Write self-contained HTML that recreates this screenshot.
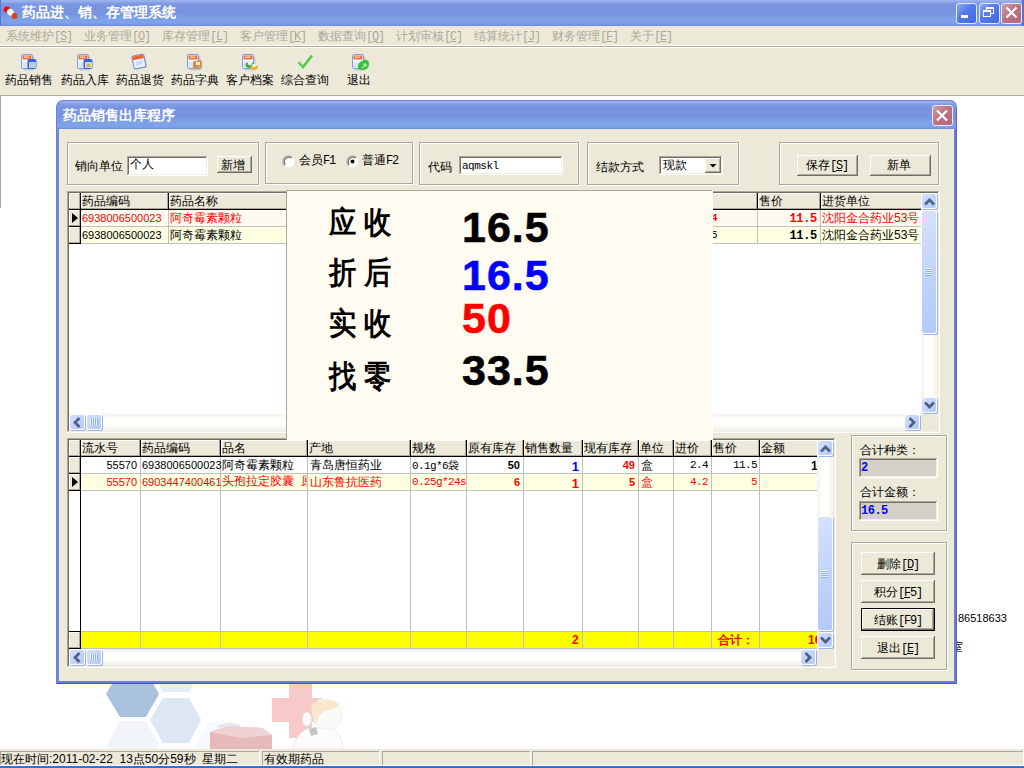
<!DOCTYPE html>
<html><head><meta charset="utf-8">
<style>
html,body{margin:0;padding:0}
body{width:1024px;height:768px;overflow:hidden;position:relative;background:#fff;font-family:"Liberation Sans",sans-serif;font-size:12px;color:#000}
.a{position:absolute}
.t{position:absolute;white-space:nowrap}
u{text-decoration:underline;text-underline-offset:1px;text-decoration-thickness:1px}
.m{font-family:"Liberation Mono",monospace;font-size:12px;letter-spacing:-1.2px}
</style></head><body>
<div class="a" style="left:0px;top:0px;width:1024px;height:26px;background:linear-gradient(#9EB3EC 0px,#9AB0EB 1px,#82A0E6 3px,#7995E0 5px,#7894E0 14px,#7CA0E6 18px,#7FA3E8 22px,#7A9AE6 24px,#6C88DF 26px);"></div>
<div class="a" style="left:0px;top:0px;width:1px;height:26px;background:#5A70CE;"></div>
<div class="a" style="left:1022px;top:0px;width:2px;height:26px;background:#5A70CE;"></div>
<svg class="a" style="left:2px;top:5px" width="16" height="14" viewBox="0 0 16 14">
<ellipse cx="5" cy="4.5" rx="3.5" ry="3" fill="#E81010"/>
<ellipse cx="8.5" cy="7.2" rx="3.2" ry="3.6" fill="#F8F8F0" transform="rotate(-40 8.5 7.2)"/>
<ellipse cx="12.5" cy="11" rx="2.8" ry="3" fill="#E04010"/>
</svg>
<div class="t" style="left:22px;top:5px;font-size:14px;line-height:14px;color:#fff;font-weight:bold;letter-spacing:0px">药品进、销、存管理系统</div>
<div class="a" style="left:956px;top:3px;width:21px;height:21px;box-sizing:border-box;border:1px solid #E4ECFA;border-radius:3px;background:linear-gradient(135deg,#8FA9F2 0%,#5478E6 45%,#3E68E2 100%)"></div>
<div class="a" style="left:961px;top:15px;width:7px;height:3px;background:#fff;"></div>
<div class="a" style="left:979px;top:3px;width:21px;height:21px;box-sizing:border-box;border:1px solid #E4ECFA;border-radius:3px;background:linear-gradient(135deg,#8FA9F2 0%,#5478E6 45%,#3E68E2 100%)"></div>
<div class="a" style="left:986px;top:7px;width:8px;height:7px;box-sizing:border-box;border:1px solid #fff;border-top-width:2px"></div>
<div class="a" style="left:983px;top:10px;width:8px;height:7px;box-sizing:border-box;border:1px solid #fff;border-top-width:2px;background:#5C7EE6"></div>
<div class="a" style="left:1001px;top:3px;width:21px;height:21px;box-sizing:border-box;border:1px solid #E4ECFA;border-radius:3px;background:linear-gradient(135deg,#D09CAC 0%,#BC7080 50%,#B46878 100%)"></div>
<svg class="a" style="left:1001px;top:3px" width="21" height="21"><path d="M5.5 4.5 L15.5 14.5 M15.5 4.5 L5.5 14.5" stroke="#fff" stroke-width="2.2"/></svg>
<div class="a" style="left:0px;top:26px;width:1024px;height:22px;background:#ECE9D8;"></div>
<div class="a" style="left:0px;top:45px;width:1024px;height:1px;background:#fff;"></div>
<div class="a" style="left:0px;top:46px;width:1024px;height:1px;background:#ACA899;"></div>
<div class="a" style="left:0px;top:47px;width:1024px;height:1px;background:#fff;"></div>
<div class="t" style="left:6px;top:30px;font-size:12px;line-height:12px;color:#ACA899;">系统维护<span class="m">[<u>S</u>]</span></div>
<div class="t" style="left:84px;top:30px;font-size:12px;line-height:12px;color:#ACA899;">业务管理<span class="m">[<u>O</u>]</span></div>
<div class="t" style="left:162px;top:30px;font-size:12px;line-height:12px;color:#ACA899;">库存管理<span class="m">[<u>L</u>]</span></div>
<div class="t" style="left:240px;top:30px;font-size:12px;line-height:12px;color:#ACA899;">客户管理<span class="m">[<u>K</u>]</span></div>
<div class="t" style="left:318px;top:30px;font-size:12px;line-height:12px;color:#ACA899;">数据查询<span class="m">[<u>Q</u>]</span></div>
<div class="t" style="left:396px;top:30px;font-size:12px;line-height:12px;color:#ACA899;">计划审核<span class="m">[<u>C</u>]</span></div>
<div class="t" style="left:474px;top:30px;font-size:12px;line-height:12px;color:#ACA899;">结算统计<span class="m">[<u>J</u>]</span></div>
<div class="t" style="left:552px;top:30px;font-size:12px;line-height:12px;color:#ACA899;">财务管理<span class="m">[<u>F</u>]</span></div>
<div class="t" style="left:630px;top:30px;font-size:12px;line-height:12px;color:#ACA899;">关于<span class="m">[<u>E</u>]</span></div>
<div class="a" style="left:0px;top:48px;width:1024px;height:47px;background:#ECE9D8;"></div>
<div class="a" style="left:0px;top:95px;width:1024px;height:1px;background:#ACA899;"></div>
<div class="t" style="left:5px;top:74px;font-size:12px;line-height:12px;">药品销售</div>
<div class="t" style="left:61px;top:74px;font-size:12px;line-height:12px;">药品入库</div>
<div class="t" style="left:116px;top:74px;font-size:12px;line-height:12px;">药品退货</div>
<div class="t" style="left:171px;top:74px;font-size:12px;line-height:12px;">药品字典</div>
<div class="t" style="left:226px;top:74px;font-size:12px;line-height:12px;">客户档案</div>
<div class="t" style="left:281px;top:74px;font-size:12px;line-height:12px;">综合查询</div>
<div class="t" style="left:347px;top:74px;font-size:12px;line-height:12px;">退出</div>
<svg class="a" style="left:21px;top:54px" width="18" height="18" viewBox="0 0 18 18">
<g transform="rotate(0 7 8)">
<rect x="1.5" y="1.5" width="11" height="14" rx="1.5" fill="#A0A8C0" opacity=".5" transform="translate(1 1)"/>
<rect x="0.5" y="0.5" width="11" height="14" rx="1.5" fill="#F8FAFF" stroke="#7F9FDF"/><rect x="1" y="8" width="10" height="6" fill="#DCE6FA"/>
<rect x="1.5" y="1.5" width="9" height="4" fill="#F07038"/>
<rect x="3" y="2.5" width="5" height="1.5" fill="#FFD0B0"/>
</g></svg>
<svg class="a" style="left:27px;top:58px" width="11" height="12" viewBox="0 0 11 12">
<rect x="0.5" y="1" width="9" height="10" rx="2" fill="#3C62D8"/><rect x="2" y="4" width="7" height="6" fill="#B8CCF4"/><path d="M3 7 L8 5" stroke="#F0C060"/></svg>
<svg class="a" style="left:77px;top:54px" width="18" height="18" viewBox="0 0 18 18">
<g transform="rotate(0 7 8)">
<rect x="1.5" y="1.5" width="11" height="14" rx="1.5" fill="#A0A8C0" opacity=".5" transform="translate(1 1)"/>
<rect x="0.5" y="0.5" width="11" height="14" rx="1.5" fill="#F8FAFF" stroke="#7F9FDF"/><rect x="1" y="8" width="10" height="6" fill="#DCE6FA"/>
<rect x="1.5" y="1.5" width="9" height="4" fill="#F07038"/>
<rect x="3" y="2.5" width="5" height="1.5" fill="#FFD0B0"/>
</g></svg>
<svg class="a" style="left:83px;top:58px" width="11" height="12" viewBox="0 0 11 12">
<rect x="0.5" y="1" width="9" height="10" rx="2" fill="#3C62D8"/><rect x="2" y="4" width="7" height="6" fill="#C8D8F8"/><circle cx="5.5" cy="7.5" r="2" fill="#E8B020"/></svg>
<svg class="a" style="left:131px;top:53px" width="18" height="18" viewBox="0 0 18 18">
<g transform="rotate(-12 8 9)">
<rect x="3" y="3" width="12" height="13" rx="1.5" fill="#8890A8" opacity=".5"/>
<rect x="2" y="2" width="12" height="13" rx="1.5" fill="#E8F0FF" stroke="#7090D8"/>
<rect x="2.5" y="2.5" width="11" height="3.5" fill="#F06030"/>
<path d="M5 9 L11 9 M5 11 L10 11" stroke="#A8C0F0"/>
</g></svg>
<svg class="a" style="left:187px;top:54px" width="18" height="18" viewBox="0 0 18 18">
<g transform="rotate(0 7 8)">
<rect x="1.5" y="1.5" width="11" height="14" rx="1.5" fill="#A0A8C0" opacity=".5" transform="translate(1 1)"/>
<rect x="0.5" y="0.5" width="11" height="14" rx="1.5" fill="#F8FAFF" stroke="#7F9FDF"/><rect x="1" y="8" width="10" height="6" fill="#DCE6FA"/>
<rect x="1.5" y="1.5" width="9" height="4" fill="#F07038"/>
<rect x="3" y="2.5" width="5" height="1.5" fill="#FFD0B0"/>
</g></svg>
<svg class="a" style="left:192px;top:59px" width="11" height="11" viewBox="0 0 11 11">
<path d="M1 4 Q1 1 4 2 L8 1 Q10 1 10 4 L10 8 Q10 10 7 10 L3 10 Q1 10 1 8 Z" fill="#D89040"/><rect x="4" y="3" width="4" height="3" fill="#F8E8D0"/><rect x="6" y="7" width="3" height="2" fill="#90B0F0"/></svg>
<svg class="a" style="left:242px;top:54px" width="18" height="18" viewBox="0 0 18 18">
<g transform="rotate(0 7 8)">
<rect x="1.5" y="1.5" width="11" height="14" rx="1.5" fill="#A0A8C0" opacity=".5" transform="translate(1 1)"/>
<rect x="0.5" y="0.5" width="11" height="14" rx="1.5" fill="#F8FAFF" stroke="#7F9FDF"/><rect x="1" y="8" width="10" height="6" fill="#DCE6FA"/>
<rect x="1.5" y="1.5" width="9" height="4" fill="#F07038"/>
<rect x="3" y="2.5" width="5" height="1.5" fill="#FFD0B0"/>
</g></svg>
<svg class="a" style="left:244px;top:59px" width="14" height="11" viewBox="0 0 14 11">
<ellipse cx="6" cy="6" rx="4.5" ry="3" fill="#40B040"/><circle cx="6" cy="4" r="2.2" fill="#F0F0F0"/>
<ellipse cx="10" cy="8.5" rx="3.8" ry="2.2" fill="#F0B020"/><circle cx="10" cy="6.5" r="1.8" fill="#F4F4F4"/></svg>
<svg class="a" style="left:297px;top:54px" width="17" height="15" viewBox="0 0 17 15">
<path d="M1.5 8 L6 13 L15 1.5" stroke="#4CCB4C" stroke-width="2.6" fill="none"/><path d="M2 8 L6 12" stroke="#80E880" stroke-width="0.8"/></svg>
<svg class="a" style="left:352px;top:54px" width="18" height="18" viewBox="0 0 18 18">
<g transform="rotate(0 7 8)">
<rect x="1.5" y="1.5" width="11" height="14" rx="1.5" fill="#A0A8C0" opacity=".5" transform="translate(1 1)"/>
<rect x="0.5" y="0.5" width="11" height="14" rx="1.5" fill="#F8FAFF" stroke="#7F9FDF"/><rect x="1" y="8" width="10" height="6" fill="#DCE6FA"/>
<rect x="1.5" y="1.5" width="9" height="4" fill="#F07038"/>
<rect x="3" y="2.5" width="5" height="1.5" fill="#FFD0B0"/>
</g></svg>
<svg class="a" style="left:357px;top:58px" width="12" height="12" viewBox="0 0 12 12">
<path d="M1 11 Q0 4 7 2 Q12 1 12 6 Q12 12 5 12 Z" fill="#3CC03C"/><path d="M5 10 L9 6 M9 6 L9 9 M9 6 L6 6" stroke="#A8F0A8" stroke-width="1.2"/></svg>
<div class="a" style="left:0px;top:96px;width:1px;height:112px;background:#ACA899;"></div>
<svg class="a" style="left:60px;top:684px" width="320" height="65" viewBox="60 684 320 65">
<polygon points="150,669 163,647 189,647 201,669 189,692 163,692" fill="#E6EEF7"/>
<polygon points="106,694 120,671 146,671 159,694 146,717 120,717" fill="#AAC1DD"/>
<polygon points="150,720 163,698 189,698 201,720 189,743 163,743" fill="#DDE7F3"/>
<polygon points="107,744 120,721 146,721 159,744 146,767 120,767" fill="#F1F5FA"/>
<polygon points="196,744 209,722 235,722 248,744 235,767 209,767" fill="#F6F8FB"/>
<rect x="289" y="684" width="23" height="54" fill="#F8C9C9"/>
<rect x="272" y="698" width="50" height="24" fill="#F8C9C9"/>
<path d="M210 749 L210 732 L228 726 L262 728 L272 735 L272 749 Z" fill="#E6BABA"/>
<path d="M210 732 L228 726 L262 728 L272 735 L240 738 Z" fill="#EFD2D2"/>
<path d="M218 727 Q228 722 240 726" stroke="#DCE6F0" stroke-width="2" fill="none"/>
<path d="M293 749 Q296 735 306 729 L330 727 Q342 732 343 749 Z" fill="#FCFCFC" stroke="#E4E4E4" stroke-width="0.8"/>
<path d="M318 700 Q332 696 340 706 Q346 720 336 728 Q322 732 314 722 Z" fill="#FAFAF8" stroke="#ECECEC" stroke-width="0.8"/>
<path d="M312 704 Q324 697 340 703 Q338 710 326 710 Q318 714 316 724 Q310 716 312 704 Z" fill="#F9E6CC"/>
<ellipse cx="307" cy="719" rx="4.5" ry="7" fill="#FBFBFB" stroke="#E6E6E6" stroke-width="0.8"/>
<path d="M309 729 L316 727 L318 734 L311 736 Z" fill="#C4C4C4"/>
</svg>
<div class="t" style="left:958px;top:613px;font-size:11px;line-height:11px;font-family:&quot;Liberation Sans&quot;,sans-serif;">86518633</div>
<div class="a" style="left:957px;top:641px;width:6px;height:12px;overflow:hidden"><div class="t" style="left:-6px;top:0;font-size:12px;line-height:12px">室</div></div>
<div class="a" style="left:0px;top:749px;width:1024px;height:17px;background:#ECE9D8;"></div>
<div class="a" style="left:0px;top:751px;width:259px;height:1px;background:#ACA899;"></div>
<div class="a" style="left:0px;top:751px;width:1px;height:14px;background:#ACA899;"></div>
<div class="a" style="left:259px;top:751px;width:1px;height:15px;background:#fff;"></div>
<div class="a" style="left:0px;top:765px;width:260px;height:1px;background:#fff;"></div>
<div class="a" style="left:262px;top:751px;width:117px;height:1px;background:#ACA899;"></div>
<div class="a" style="left:262px;top:751px;width:1px;height:14px;background:#ACA899;"></div>
<div class="a" style="left:379px;top:751px;width:1px;height:15px;background:#fff;"></div>
<div class="a" style="left:262px;top:765px;width:118px;height:1px;background:#fff;"></div>
<div class="a" style="left:382px;top:751px;width:148px;height:1px;background:#ACA899;"></div>
<div class="a" style="left:382px;top:751px;width:1px;height:14px;background:#ACA899;"></div>
<div class="a" style="left:530px;top:751px;width:1px;height:15px;background:#fff;"></div>
<div class="a" style="left:382px;top:765px;width:149px;height:1px;background:#fff;"></div>
<div class="a" style="left:532px;top:751px;width:491px;height:1px;background:#ACA899;"></div>
<div class="a" style="left:532px;top:751px;width:1px;height:14px;background:#ACA899;"></div>
<div class="a" style="left:1023px;top:751px;width:1px;height:15px;background:#fff;"></div>
<div class="a" style="left:532px;top:765px;width:492px;height:1px;background:#fff;"></div>
<div class="t" style="left:1px;top:753px;font-size:12px;line-height:12px;">现在时间:2011-02-22&nbsp; 13点50分59秒&nbsp; 星期二</div>
<div class="t" style="left:264px;top:753px;font-size:12px;line-height:12px;">有效期药品</div>
<div class="a" style="left:0px;top:766px;width:1024px;height:2px;background:linear-gradient(#3C78E0,#2F66D8);"></div>
<div class="a" style="left:56px;top:100px;width:901px;height:584px;background:#6C7FD8;border-radius:7px 7px 0 0"></div>
<div class="a" style="left:57px;top:101px;width:899px;height:28px;background:linear-gradient(#9EB3EC 0px,#9AB0EB 1px,#82A0E6 3px,#7995E0 6px,#7894E0 16px,#7CA0E6 20px,#7FA3E8 25px,#7A9AE6 27px,#6C88DF 28px);border-radius:6px 6px 0 0"></div>
<div class="a" style="left:57px;top:129px;width:2px;height:554px;background:#7088DC;"></div>
<div class="a" style="left:954px;top:129px;width:2px;height:554px;background:#6A80D8;"></div>
<div class="a" style="left:57px;top:683px;width:900px;height:1px;background:#4C50C0;"></div>
<div class="a" style="left:956px;top:108px;width:1px;height:576px;background:#5A60C8;"></div>
<div class="a" style="left:59px;top:129px;width:895px;height:552px;background:#ECE9D8;"></div>
<div class="t" style="left:63px;top:108px;font-size:14px;line-height:14px;color:#fff;font-weight:bold;">药品销售出库程序</div>
<div class="a" style="left:932px;top:105px;width:21px;height:21px;box-sizing:border-box;border:1px solid #E4ECFA;border-radius:3px;background:linear-gradient(135deg,#D09CAC 0%,#BC7080 50%,#B46878 100%)"></div>
<svg class="a" style="left:932px;top:105px" width="21" height="21"><path d="M5 5.5 L15 15.5 M15 5.5 L5 15.5" stroke="#fff" stroke-width="2.2"/></svg>
<div class="a" style="left:67px;top:142px;width:192px;height:1px;background:#ACA899;"></div>
<div class="a" style="left:67px;top:142px;width:1px;height:43px;background:#ACA899;"></div>
<div class="a" style="left:67px;top:184px;width:192px;height:1px;background:#ACA899;"></div>
<div class="a" style="left:258px;top:142px;width:1px;height:43px;background:#ACA899;"></div>
<div class="a" style="left:68px;top:143px;width:190px;height:1px;background:#fff;"></div>
<div class="a" style="left:68px;top:143px;width:1px;height:41px;background:#fff;"></div>
<div class="a" style="left:67px;top:185px;width:193px;height:1px;background:#fff;"></div>
<div class="a" style="left:259px;top:142px;width:1px;height:44px;background:#fff;"></div>
<div class="a" style="left:265px;top:142px;width:148px;height:1px;background:#ACA899;"></div>
<div class="a" style="left:265px;top:142px;width:1px;height:42px;background:#ACA899;"></div>
<div class="a" style="left:265px;top:183px;width:148px;height:1px;background:#ACA899;"></div>
<div class="a" style="left:412px;top:142px;width:1px;height:42px;background:#ACA899;"></div>
<div class="a" style="left:266px;top:143px;width:146px;height:1px;background:#fff;"></div>
<div class="a" style="left:266px;top:143px;width:1px;height:40px;background:#fff;"></div>
<div class="a" style="left:265px;top:184px;width:149px;height:1px;background:#fff;"></div>
<div class="a" style="left:413px;top:142px;width:1px;height:43px;background:#fff;"></div>
<div class="a" style="left:419px;top:142px;width:160px;height:1px;background:#ACA899;"></div>
<div class="a" style="left:419px;top:142px;width:1px;height:43px;background:#ACA899;"></div>
<div class="a" style="left:419px;top:184px;width:160px;height:1px;background:#ACA899;"></div>
<div class="a" style="left:578px;top:142px;width:1px;height:43px;background:#ACA899;"></div>
<div class="a" style="left:420px;top:143px;width:158px;height:1px;background:#fff;"></div>
<div class="a" style="left:420px;top:143px;width:1px;height:41px;background:#fff;"></div>
<div class="a" style="left:419px;top:185px;width:161px;height:1px;background:#fff;"></div>
<div class="a" style="left:579px;top:142px;width:1px;height:44px;background:#fff;"></div>
<div class="a" style="left:587px;top:142px;width:152px;height:1px;background:#ACA899;"></div>
<div class="a" style="left:587px;top:142px;width:1px;height:43px;background:#ACA899;"></div>
<div class="a" style="left:587px;top:184px;width:152px;height:1px;background:#ACA899;"></div>
<div class="a" style="left:738px;top:142px;width:1px;height:43px;background:#ACA899;"></div>
<div class="a" style="left:588px;top:143px;width:150px;height:1px;background:#fff;"></div>
<div class="a" style="left:588px;top:143px;width:1px;height:41px;background:#fff;"></div>
<div class="a" style="left:587px;top:185px;width:153px;height:1px;background:#fff;"></div>
<div class="a" style="left:739px;top:142px;width:1px;height:44px;background:#fff;"></div>
<div class="a" style="left:779px;top:142px;width:160px;height:1px;background:#ACA899;"></div>
<div class="a" style="left:779px;top:142px;width:1px;height:43px;background:#ACA899;"></div>
<div class="a" style="left:779px;top:184px;width:160px;height:1px;background:#ACA899;"></div>
<div class="a" style="left:938px;top:142px;width:1px;height:43px;background:#ACA899;"></div>
<div class="a" style="left:780px;top:143px;width:158px;height:1px;background:#fff;"></div>
<div class="a" style="left:780px;top:143px;width:1px;height:41px;background:#fff;"></div>
<div class="a" style="left:779px;top:185px;width:161px;height:1px;background:#fff;"></div>
<div class="a" style="left:939px;top:142px;width:1px;height:44px;background:#fff;"></div>
<div class="a" style="left:851px;top:435px;width:96px;height:1px;background:#ACA899;"></div>
<div class="a" style="left:851px;top:435px;width:1px;height:96px;background:#ACA899;"></div>
<div class="a" style="left:851px;top:530px;width:96px;height:1px;background:#ACA899;"></div>
<div class="a" style="left:946px;top:435px;width:1px;height:96px;background:#ACA899;"></div>
<div class="a" style="left:852px;top:436px;width:94px;height:1px;background:#fff;"></div>
<div class="a" style="left:852px;top:436px;width:1px;height:94px;background:#fff;"></div>
<div class="a" style="left:851px;top:531px;width:97px;height:1px;background:#fff;"></div>
<div class="a" style="left:947px;top:435px;width:1px;height:97px;background:#fff;"></div>
<div class="a" style="left:851px;top:542px;width:96px;height:1px;background:#ACA899;"></div>
<div class="a" style="left:851px;top:542px;width:1px;height:128px;background:#ACA899;"></div>
<div class="a" style="left:851px;top:669px;width:96px;height:1px;background:#ACA899;"></div>
<div class="a" style="left:946px;top:542px;width:1px;height:128px;background:#ACA899;"></div>
<div class="a" style="left:852px;top:543px;width:94px;height:1px;background:#fff;"></div>
<div class="a" style="left:852px;top:543px;width:1px;height:126px;background:#fff;"></div>
<div class="a" style="left:851px;top:670px;width:97px;height:1px;background:#fff;"></div>
<div class="a" style="left:947px;top:542px;width:1px;height:129px;background:#fff;"></div>
<div class="t" style="left:75px;top:160px;font-size:12px;line-height:12px;">销向单位</div>
<div class="a" style="left:127px;top:156px;width:81px;height:20px;background:#fff;"></div>
<div class="a" style="left:127px;top:156px;width:80px;height:1px;background:#ACA899;"></div>
<div class="a" style="left:127px;top:156px;width:1px;height:19px;background:#ACA899;"></div>
<div class="a" style="left:128px;top:157px;width:78px;height:1px;background:#716F64;"></div>
<div class="a" style="left:128px;top:157px;width:1px;height:17px;background:#716F64;"></div>
<div class="a" style="left:128px;top:174px;width:79px;height:1px;background:#F1EFE2;"></div>
<div class="a" style="left:206px;top:157px;width:1px;height:18px;background:#F1EFE2;"></div>
<div class="a" style="left:127px;top:175px;width:81px;height:1px;background:#fff;"></div>
<div class="a" style="left:207px;top:156px;width:1px;height:20px;background:#fff;"></div>
<div class="t" style="left:130px;top:158px;font-size:12px;line-height:12px;">个人</div>
<div class="a" style="left:217px;top:156px;width:35px;height:17px;background:#ECE9D8;"></div>
<div class="a" style="left:217px;top:156px;width:34px;height:1px;background:#fff;"></div>
<div class="a" style="left:217px;top:156px;width:1px;height:16px;background:#fff;"></div>
<div class="a" style="left:217px;top:172px;width:35px;height:1px;background:#716F64;"></div>
<div class="a" style="left:251px;top:156px;width:1px;height:17px;background:#716F64;"></div>
<div class="a" style="left:218px;top:171px;width:33px;height:1px;background:#ACA899;"></div>
<div class="a" style="left:250px;top:157px;width:1px;height:15px;background:#ACA899;"></div>
<div class="t" style="left:221px;top:159px;font-size:12px;line-height:12px;">新增</div>
<svg class="a" style="left:282px;top:155px" width="13" height="13" viewBox="0 0 13 13">
<circle cx="6.5" cy="6.5" r="6" fill="#fff"/>
<path d="M10.6 2.4 A5.8 5.8 0 0 0 2.4 10.6" stroke="#ACA899" stroke-width="1.2" fill="none"/>
<path d="M9.6 3.4 A4.4 4.4 0 0 0 3.4 9.6" stroke="#716F64" stroke-width="1.2" fill="none"/>
</svg>
<div class="t" style="left:299px;top:154px;font-size:12px;line-height:12px;">会员<span class="m">F1</span></div>
<svg class="a" style="left:346px;top:155px" width="13" height="13" viewBox="0 0 13 13">
<circle cx="6.5" cy="6.5" r="6" fill="#fff"/>
<path d="M10.6 2.4 A5.8 5.8 0 0 0 2.4 10.6" stroke="#ACA899" stroke-width="1.2" fill="none"/>
<path d="M9.6 3.4 A4.4 4.4 0 0 0 3.4 9.6" stroke="#716F64" stroke-width="1.2" fill="none"/>
<circle cx="6.5" cy="6.5" r="2" fill="#000"/></svg>
<div class="t" style="left:362px;top:154px;font-size:12px;line-height:12px;">普通<span class="m">F2</span></div>
<div class="t" style="left:428px;top:161px;font-size:12px;line-height:12px;">代码</div>
<div class="a" style="left:459px;top:156px;width:104px;height:19px;background:#fff;"></div>
<div class="a" style="left:459px;top:156px;width:103px;height:1px;background:#ACA899;"></div>
<div class="a" style="left:459px;top:156px;width:1px;height:18px;background:#ACA899;"></div>
<div class="a" style="left:460px;top:157px;width:101px;height:1px;background:#716F64;"></div>
<div class="a" style="left:460px;top:157px;width:1px;height:16px;background:#716F64;"></div>
<div class="a" style="left:460px;top:173px;width:102px;height:1px;background:#F1EFE2;"></div>
<div class="a" style="left:561px;top:157px;width:1px;height:17px;background:#F1EFE2;"></div>
<div class="a" style="left:459px;top:174px;width:104px;height:1px;background:#fff;"></div>
<div class="a" style="left:562px;top:156px;width:1px;height:19px;background:#fff;"></div>
<div class="t" style="left:462px;top:161px;font-size:11px;line-height:11px;font-family:&quot;Liberation Mono&quot;,monospace;letter-spacing:-0.5px">aqmskl</div>
<div class="t" style="left:596px;top:161px;font-size:12px;line-height:12px;">结款方式</div>
<div class="a" style="left:659px;top:156px;width:64px;height:19px;background:#fff;"></div>
<div class="a" style="left:659px;top:156px;width:63px;height:1px;background:#ACA899;"></div>
<div class="a" style="left:659px;top:156px;width:1px;height:18px;background:#ACA899;"></div>
<div class="a" style="left:660px;top:157px;width:61px;height:1px;background:#716F64;"></div>
<div class="a" style="left:660px;top:157px;width:1px;height:16px;background:#716F64;"></div>
<div class="a" style="left:660px;top:173px;width:62px;height:1px;background:#F1EFE2;"></div>
<div class="a" style="left:721px;top:157px;width:1px;height:17px;background:#F1EFE2;"></div>
<div class="a" style="left:659px;top:174px;width:64px;height:1px;background:#fff;"></div>
<div class="a" style="left:722px;top:156px;width:1px;height:19px;background:#fff;"></div>
<div class="t" style="left:663px;top:159px;font-size:12px;line-height:12px;">现款</div>
<div class="a" style="left:705px;top:158px;width:16px;height:15px;background:#ECE9D8;"></div>
<div class="a" style="left:705px;top:158px;width:15px;height:1px;background:#fff;"></div>
<div class="a" style="left:705px;top:158px;width:1px;height:14px;background:#fff;"></div>
<div class="a" style="left:705px;top:172px;width:16px;height:1px;background:#716F64;"></div>
<div class="a" style="left:720px;top:158px;width:1px;height:15px;background:#716F64;"></div>
<div class="a" style="left:706px;top:171px;width:14px;height:1px;background:#ACA899;"></div>
<div class="a" style="left:719px;top:159px;width:1px;height:13px;background:#ACA899;"></div>
<svg class="a" style="left:705px;top:158px" width="16" height="15"><path d="M4.5 6 L11.5 6 L8 9.5 Z" fill="#000"/></svg>
<div class="a" style="left:797px;top:155px;width:61px;height:21px;background:#ECE9D8;"></div>
<div class="a" style="left:797px;top:155px;width:60px;height:1px;background:#fff;"></div>
<div class="a" style="left:797px;top:155px;width:1px;height:20px;background:#fff;"></div>
<div class="a" style="left:797px;top:175px;width:61px;height:1px;background:#716F64;"></div>
<div class="a" style="left:857px;top:155px;width:1px;height:21px;background:#716F64;"></div>
<div class="a" style="left:798px;top:174px;width:59px;height:1px;background:#ACA899;"></div>
<div class="a" style="left:856px;top:156px;width:1px;height:19px;background:#ACA899;"></div>
<div class="t" style="left:806px;top:159px;font-size:12px;line-height:12px;">保存<span class="m">[<u>S</u>]</span></div>
<div class="a" style="left:870px;top:155px;width:61px;height:21px;background:#ECE9D8;"></div>
<div class="a" style="left:870px;top:155px;width:60px;height:1px;background:#fff;"></div>
<div class="a" style="left:870px;top:155px;width:1px;height:20px;background:#fff;"></div>
<div class="a" style="left:870px;top:175px;width:61px;height:1px;background:#716F64;"></div>
<div class="a" style="left:930px;top:155px;width:1px;height:21px;background:#716F64;"></div>
<div class="a" style="left:871px;top:174px;width:59px;height:1px;background:#ACA899;"></div>
<div class="a" style="left:929px;top:156px;width:1px;height:19px;background:#ACA899;"></div>
<div class="t" style="left:887px;top:159px;font-size:12px;line-height:12px;">新单</div>
<div class="a" style="left:67px;top:191px;width:873px;height:242px;background:#fff;"></div>
<div class="a" style="left:67px;top:191px;width:872px;height:1px;background:#ACA899;"></div>
<div class="a" style="left:67px;top:191px;width:1px;height:241px;background:#ACA899;"></div>
<div class="a" style="left:68px;top:192px;width:870px;height:1px;background:#716F64;"></div>
<div class="a" style="left:68px;top:192px;width:1px;height:239px;background:#716F64;"></div>
<div class="a" style="left:68px;top:431px;width:871px;height:1px;background:#F1EFE2;"></div>
<div class="a" style="left:938px;top:192px;width:1px;height:240px;background:#F1EFE2;"></div>
<div class="a" style="left:67px;top:432px;width:873px;height:1px;background:#fff;"></div>
<div class="a" style="left:939px;top:191px;width:1px;height:242px;background:#fff;"></div>
<div class="a" style="left:69px;top:193px;width:869px;height:238px;background:#fff;"></div>
<div class="a" style="left:69px;top:193px;width:11px;height:16px;background:#ECE9D8;"></div>
<div class="a" style="left:69px;top:193px;width:11px;height:1px;background:#fff;"></div>
<div class="a" style="left:69px;top:193px;width:1px;height:16px;background:#fff;"></div>
<div class="a" style="left:69px;top:208px;width:11px;height:1px;background:#ACA899;"></div>
<div class="a" style="left:79px;top:193px;width:1px;height:16px;background:#ACA899;"></div>
<div class="a" style="left:80px;top:193px;width:1px;height:17px;background:#000;"></div>
<div class="a" style="left:81px;top:193px;width:87px;height:16px;background:#ECE9D8;"></div>
<div class="a" style="left:81px;top:193px;width:87px;height:1px;background:#fff;"></div>
<div class="a" style="left:81px;top:193px;width:1px;height:16px;background:#fff;"></div>
<div class="a" style="left:81px;top:208px;width:87px;height:1px;background:#ACA899;"></div>
<div class="a" style="left:167px;top:193px;width:1px;height:16px;background:#ACA899;"></div>
<div class="t" style="left:82px;top:195px;font-size:12px;line-height:12px;">药品编码</div>
<div class="a" style="left:168px;top:193px;width:1px;height:17px;background:#000;"></div>
<div class="a" style="left:169px;top:193px;width:588px;height:16px;background:#ECE9D8;"></div>
<div class="a" style="left:169px;top:193px;width:588px;height:1px;background:#fff;"></div>
<div class="a" style="left:169px;top:193px;width:1px;height:16px;background:#fff;"></div>
<div class="a" style="left:169px;top:208px;width:588px;height:1px;background:#ACA899;"></div>
<div class="a" style="left:756px;top:193px;width:1px;height:16px;background:#ACA899;"></div>
<div class="t" style="left:170px;top:195px;font-size:12px;line-height:12px;">药品名称</div>
<div class="a" style="left:757px;top:193px;width:1px;height:17px;background:#000;"></div>
<div class="a" style="left:758px;top:193px;width:62px;height:16px;background:#ECE9D8;"></div>
<div class="a" style="left:758px;top:193px;width:62px;height:1px;background:#fff;"></div>
<div class="a" style="left:758px;top:193px;width:1px;height:16px;background:#fff;"></div>
<div class="a" style="left:758px;top:208px;width:62px;height:1px;background:#ACA899;"></div>
<div class="a" style="left:819px;top:193px;width:1px;height:16px;background:#ACA899;"></div>
<div class="t" style="left:759px;top:195px;font-size:12px;line-height:12px;">售价</div>
<div class="a" style="left:820px;top:193px;width:1px;height:17px;background:#000;"></div>
<div class="a" style="left:821px;top:193px;width:100px;height:16px;background:#ECE9D8;"></div>
<div class="a" style="left:821px;top:193px;width:100px;height:1px;background:#fff;"></div>
<div class="a" style="left:821px;top:193px;width:1px;height:16px;background:#fff;"></div>
<div class="a" style="left:821px;top:208px;width:100px;height:1px;background:#ACA899;"></div>
<div class="t" style="left:822px;top:195px;font-size:12px;line-height:12px;">进货单位</div>
<div class="a" style="left:69px;top:209px;width:852px;height:1px;background:#000;"></div>
<div class="a" style="left:81px;top:210px;width:840px;height:16px;background:#FDFAF0;"></div>
<div class="a" style="left:81px;top:227px;width:840px;height:16px;background:#FFFFE2;"></div>
<div class="a" style="left:81px;top:226px;width:840px;height:1px;background:#C0C0C0;"></div>
<div class="a" style="left:81px;top:243px;width:840px;height:1px;background:#C0C0C0;"></div>
<div class="a" style="left:168px;top:210px;width:1px;height:34px;background:#C0C0C0;"></div>
<div class="a" style="left:757px;top:210px;width:1px;height:34px;background:#C0C0C0;"></div>
<div class="a" style="left:820px;top:210px;width:1px;height:34px;background:#C0C0C0;"></div>
<div class="a" style="left:69px;top:210px;width:11px;height:16px;background:#ECE9D8;"></div>
<div class="a" style="left:69px;top:210px;width:11px;height:1px;background:#fff;"></div>
<div class="a" style="left:69px;top:210px;width:1px;height:16px;background:#fff;"></div>
<div class="a" style="left:69px;top:225px;width:11px;height:1px;background:#ACA899;"></div>
<div class="a" style="left:79px;top:210px;width:1px;height:16px;background:#ACA899;"></div>
<div class="a" style="left:69px;top:227px;width:11px;height:16px;background:#ECE9D8;"></div>
<div class="a" style="left:69px;top:227px;width:11px;height:1px;background:#fff;"></div>
<div class="a" style="left:69px;top:227px;width:1px;height:16px;background:#fff;"></div>
<div class="a" style="left:69px;top:242px;width:11px;height:1px;background:#ACA899;"></div>
<div class="a" style="left:79px;top:227px;width:1px;height:16px;background:#ACA899;"></div>
<div class="a" style="left:69px;top:226px;width:12px;height:1px;background:#000;"></div>
<div class="a" style="left:69px;top:243px;width:12px;height:1px;background:#000;"></div>
<div class="a" style="left:80px;top:210px;width:1px;height:34px;background:#000;"></div>
<svg class="a" style="left:71px;top:213px" width="8" height="10"><path d="M1 0 L7 5 L1 10 Z" fill="#000"/></svg>
<div class="t" style="left:82px;top:213px;font-size:11px;line-height:11px;color:#FF0000;">6938006500023</div>
<div class="t" style="left:170px;top:212px;font-size:12px;line-height:12px;color:#FF0000;">阿奇霉素颗粒</div>
<div class="t" style="right:207px;top:213px;font-size:12px;line-height:12px;color:#FF0000;font-weight:bold;font-family:&quot;Liberation Mono&quot;,monospace;letter-spacing:-0.3px">11.5</div>
<div class="t" style="left:822px;top:212px;font-size:12px;line-height:12px;color:#FF0000;">沈阳金合药业53号</div>
<div class="t" style="left:82px;top:230px;font-size:11px;line-height:11px;">6938006500023</div>
<div class="t" style="left:170px;top:229px;font-size:12px;line-height:12px;">阿奇霉素颗粒</div>
<div class="t" style="right:207px;top:230px;font-size:12px;line-height:12px;font-weight:bold;font-family:&quot;Liberation Mono&quot;,monospace;letter-spacing:-0.3px">11.5</div>
<div class="t" style="left:822px;top:229px;font-size:12px;line-height:12px;">沈阳金合药业53号</div>
<div class="a" style="left:713px;top:210px;width:10px;height:33px;overflow:hidden"><div class="t" style="left:-2px;top:3px;font-size:11px;line-height:11px;font-family:&quot;Liberation Mono&quot;,monospace;color:#f00;font-weight:bold">4</div><div class="t" style="left:-2px;top:20px;font-size:11px;line-height:11px;font-family:&quot;Liberation Mono&quot;,monospace;">5</div></div>
<div class="a" style="left:69px;top:414px;width:852px;height:17px;background:linear-gradient(#F3F1EC,#FEFEFB 30%,#FEFEFB 60%,#F0EFE8);"></div>
<div class="a" style="left:70px;top:415px;width:16px;height:16px;border-radius:2px;background:#9DB3E8"></div>
<div class="a" style="left:69px;top:414px;width:16px;height:16px;border-radius:2px;background:#fff"></div>
<div class="a" style="left:70px;top:415px;width:14px;height:14px;border-radius:2px;background:linear-gradient(135deg,#D6E2FD,#C3D4FB 50%,#B2C8F8)"></div>
<svg class="a" style="left:0;top:0;overflow:visible" width="1" height="1"><path d="M78.5 419.0 L75.0 422.5 L78.5 426.0" stroke="#4D6185" stroke-width="2.7" fill="none" stroke-linecap="square"/></svg>
<div class="a" style="left:87px;top:415px;width:16px;height:16px;border-radius:2px;background:#9DB3E8"></div>
<div class="a" style="left:86px;top:414px;width:16px;height:16px;border-radius:2px;background:#fff"></div>
<div class="a" style="left:87px;top:415px;width:14px;height:14px;border-radius:2px;background:linear-gradient(135deg,#D6E2FD,#C3D4FB 50%,#B2C8F8)"></div>
<div class="a" style="left:90px;top:419px;width:1px;height:6px;background:#EEF4FE;"></div>
<div class="a" style="left:91px;top:419px;width:1px;height:6px;background:#8CB0F8;"></div>
<div class="a" style="left:92px;top:419px;width:1px;height:6px;background:#EEF4FE;"></div>
<div class="a" style="left:93px;top:419px;width:1px;height:6px;background:#8CB0F8;"></div>
<div class="a" style="left:94px;top:419px;width:1px;height:6px;background:#EEF4FE;"></div>
<div class="a" style="left:95px;top:419px;width:1px;height:6px;background:#8CB0F8;"></div>
<div class="a" style="left:96px;top:419px;width:1px;height:6px;background:#EEF4FE;"></div>
<div class="a" style="left:97px;top:419px;width:1px;height:6px;background:#8CB0F8;"></div>
<div class="a" style="left:905px;top:415px;width:16px;height:16px;border-radius:2px;background:#9DB3E8"></div>
<div class="a" style="left:904px;top:414px;width:16px;height:16px;border-radius:2px;background:#fff"></div>
<div class="a" style="left:905px;top:415px;width:14px;height:14px;border-radius:2px;background:linear-gradient(135deg,#D6E2FD,#C3D4FB 50%,#B2C8F8)"></div>
<svg class="a" style="left:0;top:0;overflow:visible" width="1" height="1"><path d="M910.5 419.0 L914.0 422.5 L910.5 426.0" stroke="#4D6185" stroke-width="2.7" fill="none" stroke-linecap="square"/></svg>
<div class="a" style="left:921px;top:193px;width:17px;height:221px;background:linear-gradient(90deg,#F3F1EC,#FEFEFB 30%,#FEFEFB 60%,#F0EFE8);"></div>
<div class="a" style="left:922px;top:194px;width:16px;height:16px;border-radius:2px;background:#9DB3E8"></div>
<div class="a" style="left:921px;top:193px;width:16px;height:16px;border-radius:2px;background:#fff"></div>
<div class="a" style="left:922px;top:194px;width:14px;height:14px;border-radius:2px;background:linear-gradient(135deg,#D6E2FD,#C3D4FB 50%,#B2C8F8)"></div>
<svg class="a" style="left:0;top:0;overflow:visible" width="1" height="1"><path d="M926.0 203.5 L929.5 200.0 L933.0 203.5" stroke="#4D6185" stroke-width="2.7" fill="none" stroke-linecap="square"/></svg>
<div class="a" style="left:922px;top:211px;width:16px;height:124px;border-radius:2px;background:#9DB3E8"></div>
<div class="a" style="left:921px;top:210px;width:16px;height:124px;border-radius:2px;background:#fff"></div>
<div class="a" style="left:922px;top:211px;width:14px;height:122px;border-radius:2px;background:linear-gradient(135deg,#D6E2FD,#C3D4FB 50%,#B2C8F8)"></div>
<div class="a" style="left:926px;top:268px;width:6px;height:1px;background:#EEF4FE;"></div>
<div class="a" style="left:926px;top:269px;width:6px;height:1px;background:#8CB0F8;"></div>
<div class="a" style="left:926px;top:270px;width:6px;height:1px;background:#EEF4FE;"></div>
<div class="a" style="left:926px;top:271px;width:6px;height:1px;background:#8CB0F8;"></div>
<div class="a" style="left:926px;top:272px;width:6px;height:1px;background:#EEF4FE;"></div>
<div class="a" style="left:926px;top:273px;width:6px;height:1px;background:#8CB0F8;"></div>
<div class="a" style="left:926px;top:274px;width:6px;height:1px;background:#EEF4FE;"></div>
<div class="a" style="left:926px;top:275px;width:6px;height:1px;background:#8CB0F8;"></div>
<div class="a" style="left:922px;top:398px;width:16px;height:16px;border-radius:2px;background:#9DB3E8"></div>
<div class="a" style="left:921px;top:397px;width:16px;height:16px;border-radius:2px;background:#fff"></div>
<div class="a" style="left:922px;top:398px;width:14px;height:14px;border-radius:2px;background:linear-gradient(135deg,#D6E2FD,#C3D4FB 50%,#B2C8F8)"></div>
<svg class="a" style="left:0;top:0;overflow:visible" width="1" height="1"><path d="M926.0 403.5 L929.5 407.0 L933.0 403.5" stroke="#4D6185" stroke-width="2.7" fill="none" stroke-linecap="square"/></svg>
<div class="a" style="left:921px;top:414px;width:17px;height:17px;background:#ECE9D8;"></div>
<div class="a" style="left:67px;top:438px;width:769px;height:230px;background:#fff;"></div>
<div class="a" style="left:67px;top:438px;width:768px;height:1px;background:#ACA899;"></div>
<div class="a" style="left:67px;top:438px;width:1px;height:229px;background:#ACA899;"></div>
<div class="a" style="left:68px;top:439px;width:766px;height:1px;background:#716F64;"></div>
<div class="a" style="left:68px;top:439px;width:1px;height:227px;background:#716F64;"></div>
<div class="a" style="left:68px;top:666px;width:767px;height:1px;background:#F1EFE2;"></div>
<div class="a" style="left:834px;top:439px;width:1px;height:228px;background:#F1EFE2;"></div>
<div class="a" style="left:67px;top:667px;width:769px;height:1px;background:#fff;"></div>
<div class="a" style="left:835px;top:438px;width:1px;height:230px;background:#fff;"></div>
<div class="a" style="left:69px;top:440px;width:765px;height:226px;background:#fff;"></div>
<div class="a" style="left:69px;top:440px;width:11px;height:16px;background:#ECE9D8;"></div>
<div class="a" style="left:69px;top:440px;width:11px;height:1px;background:#fff;"></div>
<div class="a" style="left:69px;top:440px;width:1px;height:16px;background:#fff;"></div>
<div class="a" style="left:69px;top:455px;width:11px;height:1px;background:#ACA899;"></div>
<div class="a" style="left:79px;top:440px;width:1px;height:16px;background:#ACA899;"></div>
<div class="a" style="left:80px;top:440px;width:1px;height:17px;background:#000;"></div>
<div class="a" style="left:81px;top:440px;width:59px;height:16px;background:#ECE9D8;"></div>
<div class="a" style="left:81px;top:440px;width:59px;height:1px;background:#fff;"></div>
<div class="a" style="left:81px;top:440px;width:1px;height:16px;background:#fff;"></div>
<div class="a" style="left:81px;top:455px;width:59px;height:1px;background:#ACA899;"></div>
<div class="a" style="left:139px;top:440px;width:1px;height:16px;background:#ACA899;"></div>
<div class="t" style="left:82px;top:442px;font-size:12px;line-height:12px;">流水号</div>
<div class="a" style="left:140px;top:440px;width:1px;height:17px;background:#000;"></div>
<div class="a" style="left:141px;top:440px;width:79px;height:16px;background:#ECE9D8;"></div>
<div class="a" style="left:141px;top:440px;width:79px;height:1px;background:#fff;"></div>
<div class="a" style="left:141px;top:440px;width:1px;height:16px;background:#fff;"></div>
<div class="a" style="left:141px;top:455px;width:79px;height:1px;background:#ACA899;"></div>
<div class="a" style="left:219px;top:440px;width:1px;height:16px;background:#ACA899;"></div>
<div class="t" style="left:142px;top:442px;font-size:12px;line-height:12px;">药品编码</div>
<div class="a" style="left:220px;top:440px;width:1px;height:17px;background:#000;"></div>
<div class="a" style="left:221px;top:440px;width:86px;height:16px;background:#ECE9D8;"></div>
<div class="a" style="left:221px;top:440px;width:86px;height:1px;background:#fff;"></div>
<div class="a" style="left:221px;top:440px;width:1px;height:16px;background:#fff;"></div>
<div class="a" style="left:221px;top:455px;width:86px;height:1px;background:#ACA899;"></div>
<div class="a" style="left:306px;top:440px;width:1px;height:16px;background:#ACA899;"></div>
<div class="t" style="left:222px;top:442px;font-size:12px;line-height:12px;">品名</div>
<div class="a" style="left:307px;top:440px;width:1px;height:17px;background:#000;"></div>
<div class="a" style="left:308px;top:440px;width:102px;height:16px;background:#ECE9D8;"></div>
<div class="a" style="left:308px;top:440px;width:102px;height:1px;background:#fff;"></div>
<div class="a" style="left:308px;top:440px;width:1px;height:16px;background:#fff;"></div>
<div class="a" style="left:308px;top:455px;width:102px;height:1px;background:#ACA899;"></div>
<div class="a" style="left:409px;top:440px;width:1px;height:16px;background:#ACA899;"></div>
<div class="t" style="left:309px;top:442px;font-size:12px;line-height:12px;">产地</div>
<div class="a" style="left:410px;top:440px;width:1px;height:17px;background:#000;"></div>
<div class="a" style="left:411px;top:440px;width:55px;height:16px;background:#ECE9D8;"></div>
<div class="a" style="left:411px;top:440px;width:55px;height:1px;background:#fff;"></div>
<div class="a" style="left:411px;top:440px;width:1px;height:16px;background:#fff;"></div>
<div class="a" style="left:411px;top:455px;width:55px;height:1px;background:#ACA899;"></div>
<div class="a" style="left:465px;top:440px;width:1px;height:16px;background:#ACA899;"></div>
<div class="t" style="left:412px;top:442px;font-size:12px;line-height:12px;">规格</div>
<div class="a" style="left:466px;top:440px;width:1px;height:17px;background:#000;"></div>
<div class="a" style="left:467px;top:440px;width:56px;height:16px;background:#ECE9D8;"></div>
<div class="a" style="left:467px;top:440px;width:56px;height:1px;background:#fff;"></div>
<div class="a" style="left:467px;top:440px;width:1px;height:16px;background:#fff;"></div>
<div class="a" style="left:467px;top:455px;width:56px;height:1px;background:#ACA899;"></div>
<div class="a" style="left:522px;top:440px;width:1px;height:16px;background:#ACA899;"></div>
<div class="t" style="left:468px;top:442px;font-size:12px;line-height:12px;">原有库存</div>
<div class="a" style="left:523px;top:440px;width:1px;height:17px;background:#000;"></div>
<div class="a" style="left:524px;top:440px;width:58px;height:16px;background:#ECE9D8;"></div>
<div class="a" style="left:524px;top:440px;width:58px;height:1px;background:#fff;"></div>
<div class="a" style="left:524px;top:440px;width:1px;height:16px;background:#fff;"></div>
<div class="a" style="left:524px;top:455px;width:58px;height:1px;background:#ACA899;"></div>
<div class="a" style="left:581px;top:440px;width:1px;height:16px;background:#ACA899;"></div>
<div class="t" style="left:525px;top:442px;font-size:12px;line-height:12px;">销售数量</div>
<div class="a" style="left:582px;top:440px;width:1px;height:17px;background:#000;"></div>
<div class="a" style="left:583px;top:440px;width:55px;height:16px;background:#ECE9D8;"></div>
<div class="a" style="left:583px;top:440px;width:55px;height:1px;background:#fff;"></div>
<div class="a" style="left:583px;top:440px;width:1px;height:16px;background:#fff;"></div>
<div class="a" style="left:583px;top:455px;width:55px;height:1px;background:#ACA899;"></div>
<div class="a" style="left:637px;top:440px;width:1px;height:16px;background:#ACA899;"></div>
<div class="t" style="left:584px;top:442px;font-size:12px;line-height:12px;">现有库存</div>
<div class="a" style="left:638px;top:440px;width:1px;height:17px;background:#000;"></div>
<div class="a" style="left:639px;top:440px;width:34px;height:16px;background:#ECE9D8;"></div>
<div class="a" style="left:639px;top:440px;width:34px;height:1px;background:#fff;"></div>
<div class="a" style="left:639px;top:440px;width:1px;height:16px;background:#fff;"></div>
<div class="a" style="left:639px;top:455px;width:34px;height:1px;background:#ACA899;"></div>
<div class="a" style="left:672px;top:440px;width:1px;height:16px;background:#ACA899;"></div>
<div class="t" style="left:640px;top:442px;font-size:12px;line-height:12px;">单位</div>
<div class="a" style="left:673px;top:440px;width:1px;height:17px;background:#000;"></div>
<div class="a" style="left:674px;top:440px;width:37px;height:16px;background:#ECE9D8;"></div>
<div class="a" style="left:674px;top:440px;width:37px;height:1px;background:#fff;"></div>
<div class="a" style="left:674px;top:440px;width:1px;height:16px;background:#fff;"></div>
<div class="a" style="left:674px;top:455px;width:37px;height:1px;background:#ACA899;"></div>
<div class="a" style="left:710px;top:440px;width:1px;height:16px;background:#ACA899;"></div>
<div class="t" style="left:675px;top:442px;font-size:12px;line-height:12px;">进价</div>
<div class="a" style="left:711px;top:440px;width:1px;height:17px;background:#000;"></div>
<div class="a" style="left:712px;top:440px;width:47px;height:16px;background:#ECE9D8;"></div>
<div class="a" style="left:712px;top:440px;width:47px;height:1px;background:#fff;"></div>
<div class="a" style="left:712px;top:440px;width:1px;height:16px;background:#fff;"></div>
<div class="a" style="left:712px;top:455px;width:47px;height:1px;background:#ACA899;"></div>
<div class="a" style="left:758px;top:440px;width:1px;height:16px;background:#ACA899;"></div>
<div class="t" style="left:713px;top:442px;font-size:12px;line-height:12px;">售价</div>
<div class="a" style="left:759px;top:440px;width:1px;height:17px;background:#000;"></div>
<div class="a" style="left:760px;top:440px;width:57px;height:16px;background:#ECE9D8;"></div>
<div class="a" style="left:760px;top:440px;width:57px;height:1px;background:#fff;"></div>
<div class="a" style="left:760px;top:440px;width:1px;height:16px;background:#fff;"></div>
<div class="a" style="left:760px;top:455px;width:57px;height:1px;background:#ACA899;"></div>
<div class="t" style="left:761px;top:442px;font-size:12px;line-height:12px;">金额</div>
<div class="a" style="left:69px;top:456px;width:748px;height:1px;background:#000;"></div>
<div class="a" style="left:81px;top:474px;width:736px;height:16px;background:#FFFFE2;"></div>
<div class="a" style="left:81px;top:473px;width:736px;height:1px;background:#C0C0C0;"></div>
<div class="a" style="left:81px;top:490px;width:736px;height:1px;background:#C0C0C0;"></div>
<div class="a" style="left:140px;top:457px;width:1px;height:192px;background:#C0C0C0;"></div>
<div class="a" style="left:220px;top:457px;width:1px;height:192px;background:#C0C0C0;"></div>
<div class="a" style="left:307px;top:457px;width:1px;height:192px;background:#C0C0C0;"></div>
<div class="a" style="left:410px;top:457px;width:1px;height:192px;background:#C0C0C0;"></div>
<div class="a" style="left:466px;top:457px;width:1px;height:192px;background:#C0C0C0;"></div>
<div class="a" style="left:523px;top:457px;width:1px;height:192px;background:#C0C0C0;"></div>
<div class="a" style="left:582px;top:457px;width:1px;height:192px;background:#C0C0C0;"></div>
<div class="a" style="left:638px;top:457px;width:1px;height:192px;background:#C0C0C0;"></div>
<div class="a" style="left:673px;top:457px;width:1px;height:192px;background:#C0C0C0;"></div>
<div class="a" style="left:711px;top:457px;width:1px;height:192px;background:#C0C0C0;"></div>
<div class="a" style="left:759px;top:457px;width:1px;height:192px;background:#C0C0C0;"></div>
<div class="a" style="left:80px;top:457px;width:1px;height:192px;background:#000;"></div>
<div class="a" style="left:69px;top:473px;width:12px;height:1px;background:#000;"></div>
<div class="a" style="left:69px;top:490px;width:12px;height:1px;background:#000;"></div>
<div class="a" style="left:69px;top:457px;width:11px;height:16px;background:#ECE9D8;"></div>
<div class="a" style="left:69px;top:457px;width:11px;height:1px;background:#fff;"></div>
<div class="a" style="left:69px;top:457px;width:1px;height:16px;background:#fff;"></div>
<div class="a" style="left:69px;top:472px;width:11px;height:1px;background:#ACA899;"></div>
<div class="a" style="left:79px;top:457px;width:1px;height:16px;background:#ACA899;"></div>
<div class="a" style="left:69px;top:474px;width:11px;height:16px;background:#ECE9D8;"></div>
<div class="a" style="left:69px;top:474px;width:11px;height:1px;background:#fff;"></div>
<div class="a" style="left:69px;top:474px;width:1px;height:16px;background:#fff;"></div>
<div class="a" style="left:69px;top:489px;width:11px;height:1px;background:#ACA899;"></div>
<div class="a" style="left:79px;top:474px;width:1px;height:16px;background:#ACA899;"></div>
<svg class="a" style="left:71px;top:477px" width="8" height="10"><path d="M1 0 L7 5 L1 10 Z" fill="#000"/></svg>
<div class="a" style="left:81px;top:631px;width:736px;height:1px;background:#C0C0C0;"></div>
<div class="a" style="left:81px;top:632px;width:736px;height:16px;background:#FFFF00;"></div>
<div class="a" style="left:81px;top:648px;width:736px;height:1px;background:#C0C0C0;"></div>
<div class="a" style="left:140px;top:631px;width:1px;height:18px;background:#C0C0C0;"></div>
<div class="a" style="left:220px;top:631px;width:1px;height:18px;background:#C0C0C0;"></div>
<div class="a" style="left:307px;top:631px;width:1px;height:18px;background:#C0C0C0;"></div>
<div class="a" style="left:410px;top:631px;width:1px;height:18px;background:#C0C0C0;"></div>
<div class="a" style="left:466px;top:631px;width:1px;height:18px;background:#C0C0C0;"></div>
<div class="a" style="left:523px;top:631px;width:1px;height:18px;background:#C0C0C0;"></div>
<div class="a" style="left:582px;top:631px;width:1px;height:18px;background:#C0C0C0;"></div>
<div class="a" style="left:638px;top:631px;width:1px;height:18px;background:#C0C0C0;"></div>
<div class="a" style="left:673px;top:631px;width:1px;height:18px;background:#C0C0C0;"></div>
<div class="a" style="left:711px;top:631px;width:1px;height:18px;background:#C0C0C0;"></div>
<div class="a" style="left:759px;top:631px;width:1px;height:18px;background:#C0C0C0;"></div>
<div class="a" style="left:69px;top:631px;width:12px;height:1px;background:#000;"></div>
<div class="a" style="left:69px;top:648px;width:12px;height:1px;background:#000;"></div>
<div class="a" style="left:69px;top:632px;width:11px;height:16px;background:#ECE9D8;"></div>
<div class="a" style="left:69px;top:632px;width:11px;height:1px;background:#fff;"></div>
<div class="a" style="left:69px;top:632px;width:1px;height:16px;background:#fff;"></div>
<div class="a" style="left:69px;top:647px;width:11px;height:1px;background:#ACA899;"></div>
<div class="a" style="left:79px;top:632px;width:1px;height:16px;background:#ACA899;"></div>
<div class="a" style="left:80px;top:631px;width:1px;height:18px;background:#000;"></div>
<div class="t" style="left:572px;top:634px;font-size:12px;line-height:12px;color:#FF0000;font-weight:bold;">2</div>
<div class="t" style="left:718px;top:634px;font-size:12px;line-height:12px;color:#FF0000;font-weight:bold;">合计：</div>
<div class="a" style="left:800px;top:632px;width:17px;height:16px;overflow:hidden"><div class="t" style="left:8px;top:2px;font-size:12px;line-height:12px;color:#f00;font-weight:bold">16</div></div>
<div class="t" style="right:887px;top:460px;font-size:11px;line-height:11px;">55570</div>
<div class="t" style="right:887px;top:477px;font-size:11px;line-height:11px;color:#FF0000;">55570</div>
<div class="t" style="left:142px;top:460px;font-size:11px;line-height:11px;">6938006500023</div>
<div class="t" style="left:142px;top:477px;font-size:11px;line-height:11px;color:#FF0000;">6903447400461</div>
<div class="t" style="left:222px;top:459px;font-size:12px;line-height:12px;">阿奇霉素颗粒</div>
<div class="a" style="left:221px;top:474px;width:86px;height:16px;overflow:hidden"><div class="t" style="left:1px;top:1px;font-size:12px;line-height:12px;color:#f00">头孢拉定胶囊&nbsp; 原</div></div>
<div class="t" style="left:310px;top:459px;font-size:12px;line-height:12px;">青岛唐恒药业</div>
<div class="t" style="left:310px;top:476px;font-size:12px;line-height:12px;color:#FF0000;">山东鲁抗医药</div>
<div class="t" style="left:412px;top:460px;font-size:11px;line-height:11px;font-family:&quot;Liberation Mono&quot;,monospace;letter-spacing:-0.6px">0.1g*6<span style="font-family:&quot;Liberation Sans&quot;;letter-spacing:0">袋</span></div>
<div class="a" style="left:411px;top:474px;width:55px;height:16px;overflow:hidden"><div class="t" style="left:1px;top:3px;font-size:11px;line-height:11px;color:#f00;font-family:&quot;Liberation Mono&quot;,monospace;letter-spacing:-0.6px">0.25g*24s</div></div>
<div class="t" style="right:504px;top:460px;font-size:11px;line-height:11px;font-weight:bold;">50</div>
<div class="t" style="right:504px;top:477px;font-size:11px;line-height:11px;color:#FF0000;font-weight:bold;">6</div>
<div class="t" style="right:445px;top:460px;font-size:13px;line-height:13px;color:#0000FF;font-weight:bold;">1</div>
<div class="t" style="right:445px;top:477px;font-size:13px;line-height:13px;color:#FF0000;font-weight:bold;">1</div>
<div class="t" style="right:389px;top:460px;font-size:11px;line-height:11px;color:#FF0000;font-weight:bold;">49</div>
<div class="t" style="right:389px;top:477px;font-size:11px;line-height:11px;color:#FF0000;font-weight:bold;">5</div>
<div class="t" style="left:641px;top:459px;font-size:12px;line-height:12px;">盒</div>
<div class="t" style="left:641px;top:476px;font-size:12px;line-height:12px;color:#FF0000;">盒</div>
<div class="t" style="right:316px;top:460px;font-size:11px;line-height:11px;font-family:&quot;Liberation Mono&quot;,monospace;letter-spacing:-0.6px">2.4</div>
<div class="t" style="right:316px;top:477px;font-size:11px;line-height:11px;color:#FF0000;font-family:&quot;Liberation Mono&quot;,monospace;letter-spacing:-0.6px">4.2</div>
<div class="t" style="right:267px;top:460px;font-size:11px;line-height:11px;font-family:&quot;Liberation Mono&quot;,monospace;letter-spacing:-0.6px">11.5</div>
<div class="t" style="right:267px;top:477px;font-size:11px;line-height:11px;color:#FF0000;font-family:&quot;Liberation Mono&quot;,monospace;letter-spacing:-0.6px">5</div>
<div class="a" style="left:800px;top:457px;width:17px;height:16px;overflow:hidden"><div class="t" style="left:11px;top:3px;font-size:12px;line-height:12px;font-weight:bold">16.5</div></div>
<div class="a" style="left:69px;top:649px;width:748px;height:17px;background:linear-gradient(#F3F1EC,#FEFEFB 30%,#FEFEFB 60%,#F0EFE8);"></div>
<div class="a" style="left:70px;top:650px;width:16px;height:16px;border-radius:2px;background:#9DB3E8"></div>
<div class="a" style="left:69px;top:649px;width:16px;height:16px;border-radius:2px;background:#fff"></div>
<div class="a" style="left:70px;top:650px;width:14px;height:14px;border-radius:2px;background:linear-gradient(135deg,#D6E2FD,#C3D4FB 50%,#B2C8F8)"></div>
<svg class="a" style="left:0;top:0;overflow:visible" width="1" height="1"><path d="M78.5 654.0 L75.0 657.5 L78.5 661.0" stroke="#4D6185" stroke-width="2.7" fill="none" stroke-linecap="square"/></svg>
<div class="a" style="left:87px;top:650px;width:16px;height:16px;border-radius:2px;background:#9DB3E8"></div>
<div class="a" style="left:86px;top:649px;width:16px;height:16px;border-radius:2px;background:#fff"></div>
<div class="a" style="left:87px;top:650px;width:14px;height:14px;border-radius:2px;background:linear-gradient(135deg,#D6E2FD,#C3D4FB 50%,#B2C8F8)"></div>
<div class="a" style="left:90px;top:654px;width:1px;height:6px;background:#EEF4FE;"></div>
<div class="a" style="left:91px;top:654px;width:1px;height:6px;background:#8CB0F8;"></div>
<div class="a" style="left:92px;top:654px;width:1px;height:6px;background:#EEF4FE;"></div>
<div class="a" style="left:93px;top:654px;width:1px;height:6px;background:#8CB0F8;"></div>
<div class="a" style="left:94px;top:654px;width:1px;height:6px;background:#EEF4FE;"></div>
<div class="a" style="left:95px;top:654px;width:1px;height:6px;background:#8CB0F8;"></div>
<div class="a" style="left:96px;top:654px;width:1px;height:6px;background:#EEF4FE;"></div>
<div class="a" style="left:97px;top:654px;width:1px;height:6px;background:#8CB0F8;"></div>
<div class="a" style="left:801px;top:650px;width:16px;height:16px;border-radius:2px;background:#9DB3E8"></div>
<div class="a" style="left:800px;top:649px;width:16px;height:16px;border-radius:2px;background:#fff"></div>
<div class="a" style="left:801px;top:650px;width:14px;height:14px;border-radius:2px;background:linear-gradient(135deg,#D6E2FD,#C3D4FB 50%,#B2C8F8)"></div>
<svg class="a" style="left:0;top:0;overflow:visible" width="1" height="1"><path d="M806.5 654.0 L810.0 657.5 L806.5 661.0" stroke="#4D6185" stroke-width="2.7" fill="none" stroke-linecap="square"/></svg>
<div class="a" style="left:817px;top:440px;width:17px;height:209px;background:linear-gradient(90deg,#F3F1EC,#FEFEFB 30%,#FEFEFB 60%,#F0EFE8);"></div>
<div class="a" style="left:818px;top:441px;width:16px;height:16px;border-radius:2px;background:#9DB3E8"></div>
<div class="a" style="left:817px;top:440px;width:16px;height:16px;border-radius:2px;background:#fff"></div>
<div class="a" style="left:818px;top:441px;width:14px;height:14px;border-radius:2px;background:linear-gradient(135deg,#D6E2FD,#C3D4FB 50%,#B2C8F8)"></div>
<svg class="a" style="left:0;top:0;overflow:visible" width="1" height="1"><path d="M822.0 450.5 L825.5 447.0 L829.0 450.5" stroke="#4D6185" stroke-width="2.7" fill="none" stroke-linecap="square"/></svg>
<div class="a" style="left:818px;top:517px;width:16px;height:115px;border-radius:2px;background:#9DB3E8"></div>
<div class="a" style="left:817px;top:516px;width:16px;height:115px;border-radius:2px;background:#fff"></div>
<div class="a" style="left:818px;top:517px;width:14px;height:113px;border-radius:2px;background:linear-gradient(135deg,#D6E2FD,#C3D4FB 50%,#B2C8F8)"></div>
<div class="a" style="left:822px;top:570px;width:6px;height:1px;background:#EEF4FE;"></div>
<div class="a" style="left:822px;top:571px;width:6px;height:1px;background:#8CB0F8;"></div>
<div class="a" style="left:822px;top:572px;width:6px;height:1px;background:#EEF4FE;"></div>
<div class="a" style="left:822px;top:573px;width:6px;height:1px;background:#8CB0F8;"></div>
<div class="a" style="left:822px;top:574px;width:6px;height:1px;background:#EEF4FE;"></div>
<div class="a" style="left:822px;top:575px;width:6px;height:1px;background:#8CB0F8;"></div>
<div class="a" style="left:822px;top:576px;width:6px;height:1px;background:#EEF4FE;"></div>
<div class="a" style="left:822px;top:577px;width:6px;height:1px;background:#8CB0F8;"></div>
<div class="a" style="left:818px;top:633px;width:16px;height:16px;border-radius:2px;background:#9DB3E8"></div>
<div class="a" style="left:817px;top:632px;width:16px;height:16px;border-radius:2px;background:#fff"></div>
<div class="a" style="left:818px;top:633px;width:14px;height:14px;border-radius:2px;background:linear-gradient(135deg,#D6E2FD,#C3D4FB 50%,#B2C8F8)"></div>
<svg class="a" style="left:0;top:0;overflow:visible" width="1" height="1"><path d="M822.0 638.5 L825.5 642.0 L829.0 638.5" stroke="#4D6185" stroke-width="2.7" fill="none" stroke-linecap="square"/></svg>
<div class="a" style="left:817px;top:649px;width:17px;height:17px;background:#ECE9D8;"></div>
<div class="t" style="left:860px;top:444px;font-size:12px;line-height:12px;">合计种类：</div>
<div class="a" style="left:859px;top:458px;width:79px;height:20px;background:#D4D0C8;"></div>
<div class="a" style="left:859px;top:458px;width:78px;height:1px;background:#ACA899;"></div>
<div class="a" style="left:859px;top:458px;width:1px;height:19px;background:#ACA899;"></div>
<div class="a" style="left:860px;top:459px;width:76px;height:1px;background:#716F64;"></div>
<div class="a" style="left:860px;top:459px;width:1px;height:17px;background:#716F64;"></div>
<div class="a" style="left:860px;top:476px;width:77px;height:1px;background:#F1EFE2;"></div>
<div class="a" style="left:936px;top:459px;width:1px;height:18px;background:#F1EFE2;"></div>
<div class="a" style="left:859px;top:477px;width:79px;height:1px;background:#fff;"></div>
<div class="a" style="left:937px;top:458px;width:1px;height:20px;background:#fff;"></div>
<div class="t" style="left:861px;top:462px;font-size:12px;line-height:12px;color:#0000FF;font-weight:bold;font-family:&quot;Liberation Mono&quot;,monospace;">2</div>
<div class="t" style="left:860px;top:486px;font-size:12px;line-height:12px;">合计金额：</div>
<div class="a" style="left:859px;top:501px;width:79px;height:20px;background:#D4D0C8;"></div>
<div class="a" style="left:859px;top:501px;width:78px;height:1px;background:#ACA899;"></div>
<div class="a" style="left:859px;top:501px;width:1px;height:19px;background:#ACA899;"></div>
<div class="a" style="left:860px;top:502px;width:76px;height:1px;background:#716F64;"></div>
<div class="a" style="left:860px;top:502px;width:1px;height:17px;background:#716F64;"></div>
<div class="a" style="left:860px;top:519px;width:77px;height:1px;background:#F1EFE2;"></div>
<div class="a" style="left:936px;top:502px;width:1px;height:18px;background:#F1EFE2;"></div>
<div class="a" style="left:859px;top:520px;width:79px;height:1px;background:#fff;"></div>
<div class="a" style="left:937px;top:501px;width:1px;height:20px;background:#fff;"></div>
<div class="t" style="left:861px;top:505px;font-size:12px;line-height:12px;color:#0000FF;font-weight:bold;font-family:&quot;Liberation Mono&quot;,monospace;letter-spacing:-0.5px">16.5</div>
<div class="a" style="left:861px;top:552px;width:74px;height:23px;background:#ECE9D8;"></div>
<div class="a" style="left:861px;top:552px;width:73px;height:1px;background:#fff;"></div>
<div class="a" style="left:861px;top:552px;width:1px;height:22px;background:#fff;"></div>
<div class="a" style="left:861px;top:574px;width:74px;height:1px;background:#716F64;"></div>
<div class="a" style="left:934px;top:552px;width:1px;height:23px;background:#716F64;"></div>
<div class="a" style="left:862px;top:573px;width:72px;height:1px;background:#ACA899;"></div>
<div class="a" style="left:933px;top:553px;width:1px;height:21px;background:#ACA899;"></div>
<div class="t" style="left:877px;top:558px;font-size:12px;line-height:12px;">删除<span class="m">[<u>D</u>]</span></div>
<div class="a" style="left:861px;top:580px;width:74px;height:23px;background:#ECE9D8;"></div>
<div class="a" style="left:861px;top:580px;width:73px;height:1px;background:#fff;"></div>
<div class="a" style="left:861px;top:580px;width:1px;height:22px;background:#fff;"></div>
<div class="a" style="left:861px;top:602px;width:74px;height:1px;background:#716F64;"></div>
<div class="a" style="left:934px;top:580px;width:1px;height:23px;background:#716F64;"></div>
<div class="a" style="left:862px;top:601px;width:72px;height:1px;background:#ACA899;"></div>
<div class="a" style="left:933px;top:581px;width:1px;height:21px;background:#ACA899;"></div>
<div class="t" style="left:874px;top:586px;font-size:12px;line-height:12px;">积分<span class="m">[<u>F</u>5]</span></div>
<div class="a" style="left:861px;top:608px;width:74px;height:23px;background:#000;"></div>
<div class="a" style="left:862px;top:609px;width:72px;height:21px;background:#ECE9D8;"></div>
<div class="a" style="left:862px;top:609px;width:71px;height:1px;background:#fff;"></div>
<div class="a" style="left:862px;top:609px;width:1px;height:20px;background:#fff;"></div>
<div class="a" style="left:862px;top:629px;width:72px;height:1px;background:#716F64;"></div>
<div class="a" style="left:933px;top:609px;width:1px;height:21px;background:#716F64;"></div>
<div class="a" style="left:863px;top:628px;width:70px;height:1px;background:#ACA899;"></div>
<div class="a" style="left:932px;top:610px;width:1px;height:19px;background:#ACA899;"></div>
<div class="t" style="left:874px;top:614px;font-size:12px;line-height:12px;">结账<span class="m">[F9]</span></div>
<div class="a" style="left:861px;top:636px;width:74px;height:23px;background:#ECE9D8;"></div>
<div class="a" style="left:861px;top:636px;width:73px;height:1px;background:#fff;"></div>
<div class="a" style="left:861px;top:636px;width:1px;height:22px;background:#fff;"></div>
<div class="a" style="left:861px;top:658px;width:74px;height:1px;background:#716F64;"></div>
<div class="a" style="left:934px;top:636px;width:1px;height:23px;background:#716F64;"></div>
<div class="a" style="left:862px;top:657px;width:72px;height:1px;background:#ACA899;"></div>
<div class="a" style="left:933px;top:637px;width:1px;height:21px;background:#ACA899;"></div>
<div class="t" style="left:877px;top:642px;font-size:12px;line-height:12px;">退出<span class="m">[<u>E</u>]</span></div>
<div class="a" style="left:286px;top:190px;width:426px;height:250px;background:#FFFBF0;"></div>
<div class="a" style="left:286px;top:190px;width:426px;height:1px;background:#ACA899;"></div>
<div class="a" style="left:286px;top:190px;width:1px;height:250px;background:#ACA899;"></div>
<div class="a" style="left:712px;top:190px;width:1px;height:250px;background:#fff;"></div>
<div class="t" style="left:329px;top:207px;font-size:31px;line-height:31px;font-weight:bold;letter-spacing:9px;transform:scaleX(0.88);transform-origin:0 0">应收</div>
<div class="t" style="left:329px;top:257px;font-size:31px;line-height:31px;font-weight:bold;letter-spacing:9px;transform:scaleX(0.88);transform-origin:0 0">折后</div>
<div class="t" style="left:329px;top:308px;font-size:31px;line-height:31px;font-weight:bold;letter-spacing:9px;transform:scaleX(0.88);transform-origin:0 0">实收</div>
<div class="t" style="left:329px;top:361px;font-size:31px;line-height:31px;font-weight:bold;letter-spacing:9px;transform:scaleX(0.88);transform-origin:0 0">找零</div>
<div class="t" style="left:462px;top:206px;font-size:43px;line-height:43px;font-weight:bold;letter-spacing:1px;-webkit-text-stroke:0.6px #000">16.5</div>
<div class="t" style="left:462px;top:254px;font-size:43px;line-height:43px;color:#0000FF;font-weight:bold;letter-spacing:1px;-webkit-text-stroke:0.6px #0000FF">16.5</div>
<div class="t" style="left:462px;top:297px;font-size:43px;line-height:43px;color:#FF0000;font-weight:bold;letter-spacing:1px;-webkit-text-stroke:0.6px #FF0000">50</div>
<div class="t" style="left:462px;top:349px;font-size:43px;line-height:43px;font-weight:bold;letter-spacing:1px;-webkit-text-stroke:0.6px #000">33.5</div>
</body></html>
